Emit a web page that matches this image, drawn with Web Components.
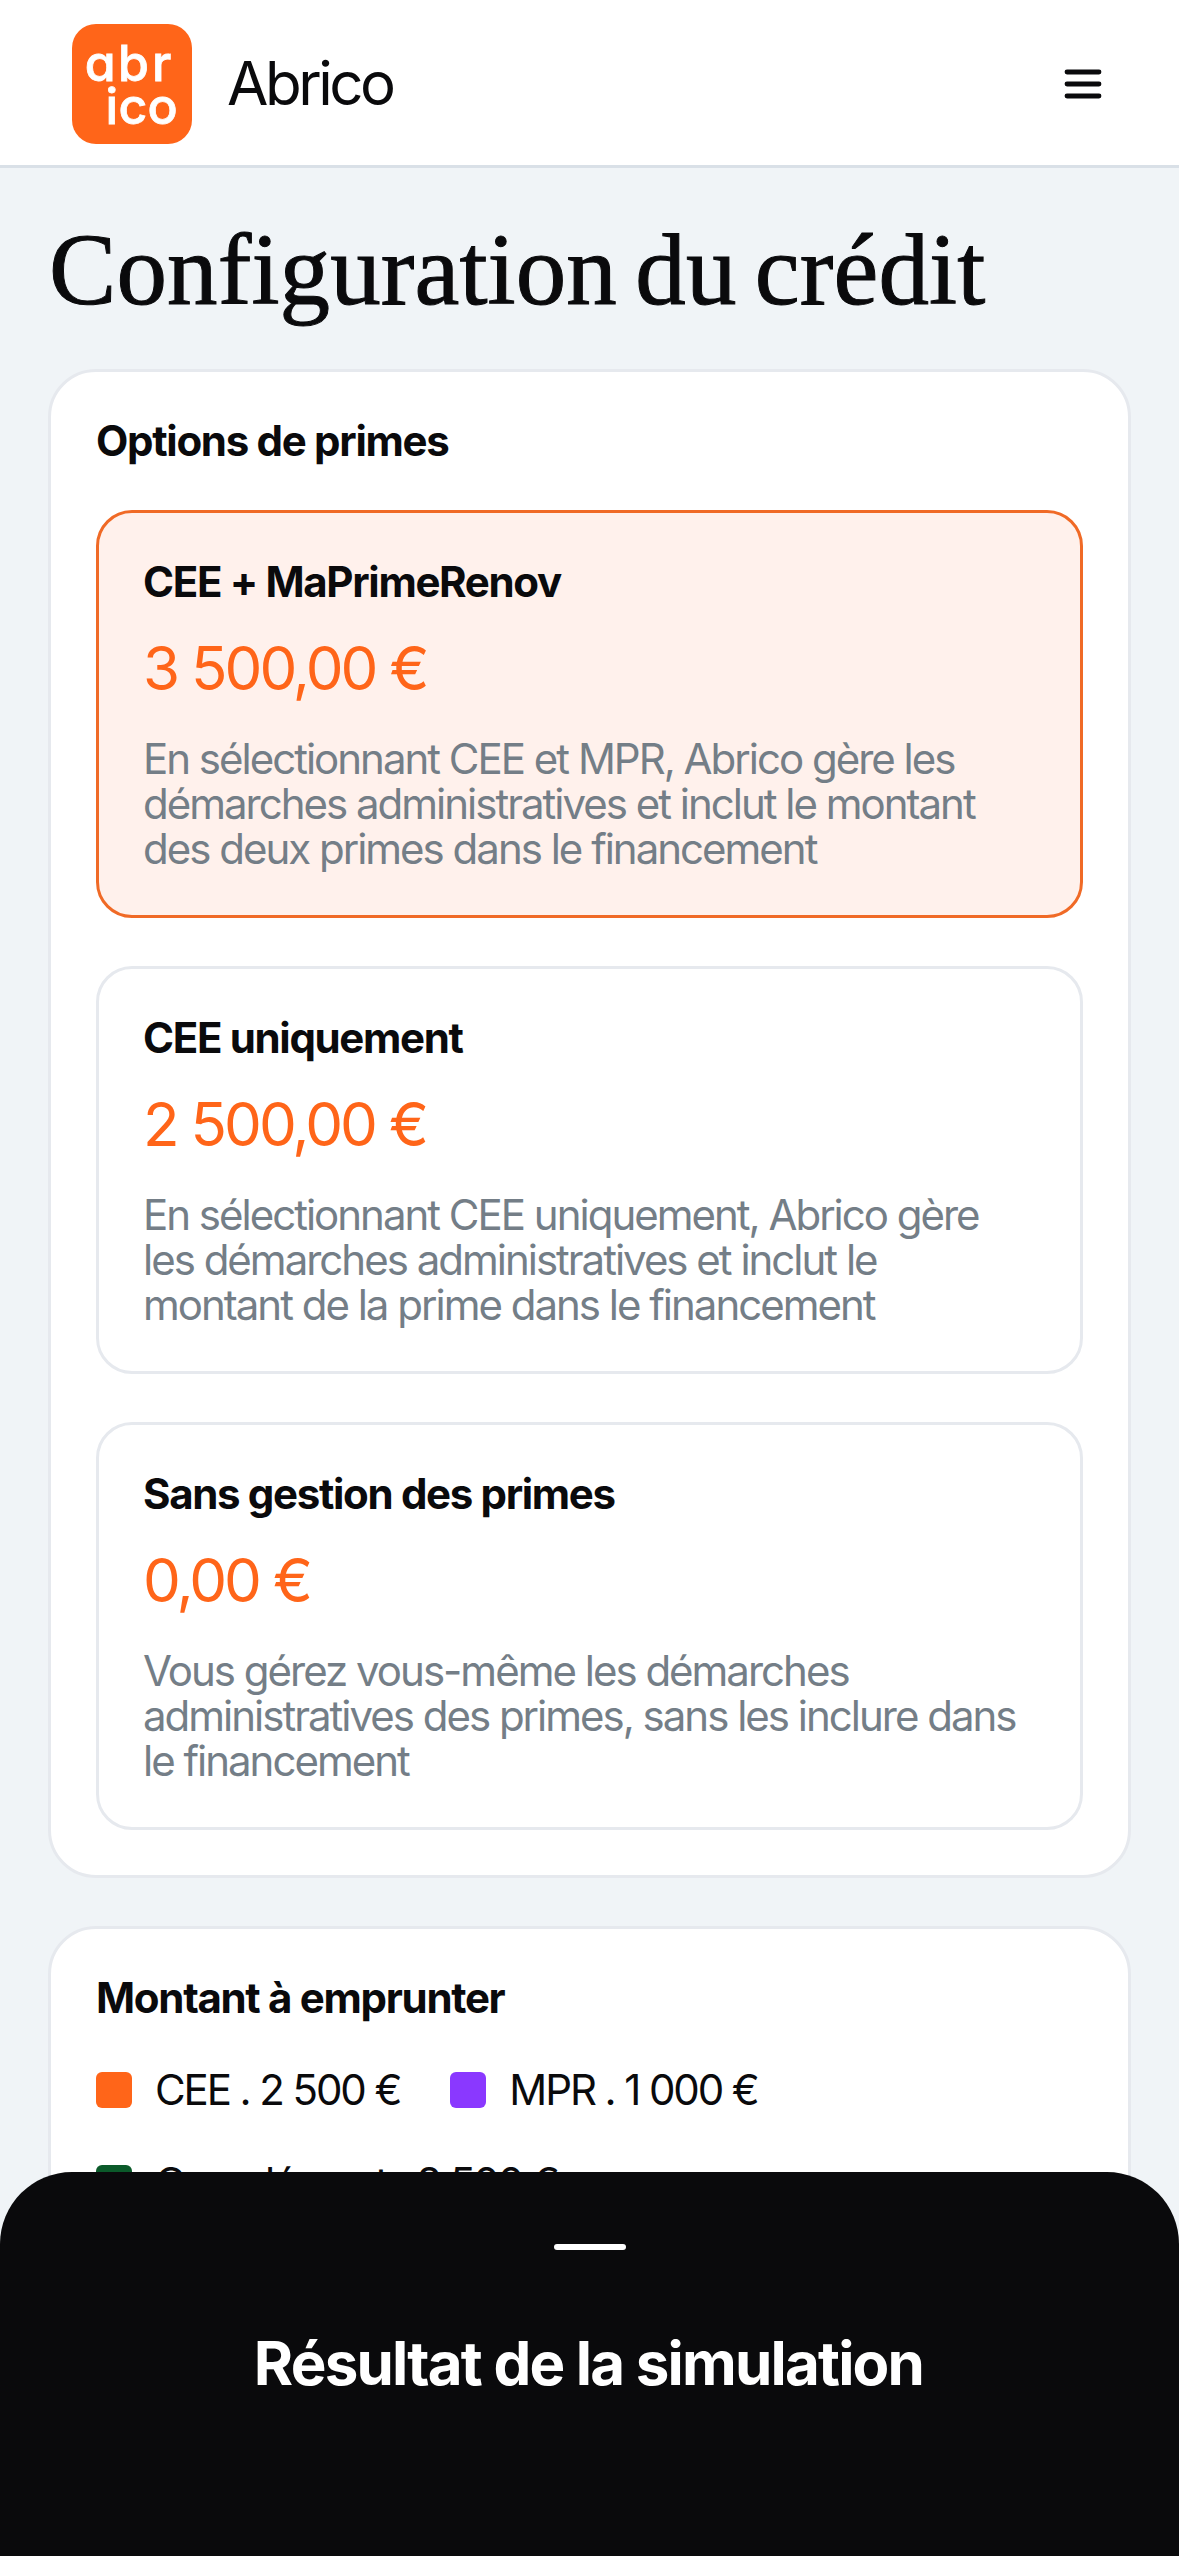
<!DOCTYPE html>
<html lang="fr">
<head>
<meta charset="UTF-8">
<title>Abrico</title>
<style>
    body{
        margin: 0;
        height: 2556px;
        overflow: hidden;
        background-color: #f0f4f7;
        color: #0a0a0c;
        font-family: Inter, 'Liberation Sans', sans-serif;
        font-size: 42px;
    }
    main{
        display: flex;
        flex-direction: column;
        gap: 48px;
        padding: 46px 48px 0;
    }
</style>
</head>
<body>
    <site-header>Abrico</site-header>
    <main>
        <page-title>Configuration du crédit</page-title>
        <config-card>
            <span slot="title">Options de primes</span>
            <prime-option selected>
                <span slot="title">CEE + MaPrimeRenov</span>
                <span slot="price">3 500,00 €</span>
                En sélectionnant CEE et MPR, Abrico gère les démarches administratives et inclut le montant des deux primes dans le financement
            </prime-option>
            <prime-option>
                <span slot="title">CEE uniquement</span>
                <span slot="price">2 500,00 €</span>
                En sélectionnant CEE uniquement, Abrico gère les démarches administratives et inclut le montant de la prime dans le financement
            </prime-option>
            <prime-option>
                <span slot="title">Sans gestion des primes</span>
                <span slot="price">0,00 €</span>
                Vous gérez vous-même les démarches administratives des primes, sans les inclure dans le financement
            </prime-option>
        </config-card>
        <config-card>
            <span slot="title">Montant à emprunter</span>
            <amount-legend>
                <legend-item style="--swatch:#ff6519">CEE . 2 500 €</legend-item>
                <legend-item style="--swatch:#8a38ff">MPR . 1 000 €</legend-item>
                <legend-item style="--swatch:#0b5a2a">Complément . 8 500 €</legend-item>
            </amount-legend>
        </config-card>
    </main>
    <result-sheet>Résultat de la simulation</result-sheet>

<script>
class AbricoLogo extends HTMLElement{
    constructor(){
        super();
        this.attachShadow({mode:'open'});
    }
    connectedCallback(){
        this.shadowRoot.innerHTML = `
        <style>
            :host{
                display: block;
                width: 120px;
                height: 120px;
            }
            svg{
                display: block;
            }
            text{
                font: 500 50px Inter, sans-serif;
                fill: white;
                stroke: white;
                stroke-width: .8px;
            }
        </style>
        <svg width="120" height="120" viewBox="0 0 120 120" aria-label="abrico">
            <rect width="120" height="120" rx="24" fill="#ff6519"/>
            <text x="12.7 46 80 33.6 46.4 75.6" y="57 57 57 100 100 100">ɑbrico</text>
        </svg>
        `
    }
}

class SiteHeader extends HTMLElement{
    constructor(){
        super();
        this.attachShadow({mode:'open'});
    }
    connectedCallback(){
        this.shadowRoot.innerHTML = `
        <style>
            :host{
                display: block;
            }
            header{
                display: flex;
                align-items: center;
                box-sizing: border-box;
                height: 168px;
                padding: 3px 72px 0;
                background-color: white;
                border-bottom: 3px solid #d9e0e7;
            }
            .name{
                margin: 0 0 2px 35px;
                font-size: 60px;
                line-height: 60px;
                letter-spacing: -3.5px;
            }
            .menu{
                margin-left: auto;
            }
        </style>
        <header>
            <abrico-logo></abrico-logo>
            <div class="name"><slot></slot></div>
            <svg class="menu" width="48" height="48" viewBox="0 0 48 48" stroke="#0a0a0c" stroke-width="4.8" stroke-linecap="round">
                <line x1="8" y1="12" x2="40" y2="12"/>
                <line x1="8" y1="24" x2="40" y2="24"/>
                <line x1="8" y1="36" x2="40" y2="36"/>
            </svg>
        </header>
        `
    }
}

class PageTitle extends HTMLElement{
    constructor(){
        super();
        this.attachShadow({mode:'open'});
    }
    connectedCallback(){
        this.shadowRoot.innerHTML = `
        <style>
            :host{
                display: block;
                margin: 0 0 -5px 1px;
            }
            h1{
                margin: 0;
                font: 400 101px/112px 'Liberation Serif', serif;
                font-variant-ligatures: none;
                letter-spacing: .1px;
                word-spacing: -7px;
                white-space: nowrap;
                -webkit-text-stroke: 1px currentColor;
            }
        </style>
        <h1><slot></slot></h1>
        `
    }
}

class ConfigCard extends HTMLElement{
    constructor(){
        super();
        this.attachShadow({mode:'open'});
    }
    connectedCallback(){
        this.shadowRoot.innerHTML = `
        <style>
            :host{
                display: block;
                padding: 45px;
                background-color: white;
                border: 3px solid #e6e9ee;
                border-radius: 48px;
            }
            h2{
                margin: 0 0 45px;
                font-size: 42px;
                font-weight: 700;
                line-height: 48px;
                letter-spacing: -1.3px;
            }
            .content{
                display: flex;
                flex-direction: column;
                gap: 48px;
            }
        </style>
        <h2><slot name="title"></slot></h2>
        <div class="content"><slot></slot></div>
        `
    }
}

class PrimeOption extends HTMLElement{
    constructor(){
        super();
        this.attachShadow({mode:'open'});
    }
    connectedCallback(){
        this.shadowRoot.innerHTML = `
        <style>
            :host{
                display: block;
                padding: 45px 45px 44px 44px;
                border: 3px solid #e6e9ee;
                border-radius: 36px;
            }
            :host([selected]){
                background-color: #fff1ec;
                border-color: #f06a26;
            }
            h3{
                margin: 0;
                font-size: 42px;
                font-weight: 700;
                line-height: 48px;
                letter-spacing: -1.33px;
            }
            .price{
                margin: 32px 0 38px;
                color: #ff6519;
                font-size: 60px;
                line-height: 60px;
                letter-spacing: -2.95px;
            }
            p{
                margin: 0;
                padding-right: 8px;
                color: #747e87;
                line-height: 45px;
                letter-spacing: -2px;
            }
        </style>
        <h3><slot name="title"></slot></h3>
        <div class="price"><slot name="price"></slot></div>
        <p><slot></slot></p>
        `
    }
}

class AmountLegend extends HTMLElement{
    constructor(){
        super();
        this.attachShadow({mode:'open'});
    }
    connectedCallback(){
        this.shadowRoot.innerHTML = `
        <style>
            :host{
                display: flex;
                flex-wrap: wrap;
                gap: 45px 50px;
                margin-top: -1px;
            }
        </style>
        <slot></slot>
        `
    }
}

class LegendItem extends HTMLElement{
    constructor(){
        super();
        this.attachShadow({mode:'open'});
    }
    connectedCallback(){
        this.shadowRoot.innerHTML = `
        <style>
            :host{
                display: flex;
                align-items: center;
                gap: 23px;
                line-height: 48px;
                letter-spacing: -2.1px;
                white-space: nowrap;
            }
            i{
                width: 36px;
                height: 36px;
                border-radius: 6px;
                background-color: var(--swatch);
            }
        </style>
        <i></i>
        <span><slot></slot></span>
        `
    }
}

class ResultSheet extends HTMLElement{
    constructor(){
        super();
        this.attachShadow({mode:'open'});
    }
    connectedCallback(){
        this.shadowRoot.innerHTML = `
        <style>
            :host{
                display: flex;
                flex-direction: column;
                align-items: center;
                box-sizing: border-box;
                position: fixed;
                left: 0;
                right: 0;
                bottom: 0;
                height: 384px;
                padding-top: 72px;
                background-color: #0a0a0c;
                color: white;
                border-radius: 72px 72px 0 0;
            }
            .handle{
                width: 72px;
                height: 6px;
                border-radius: 3px;
                background-color: white;
            }
            h2{
                margin: 83px 2px 0 0;
                font-size: 60px;
                font-weight: 700;
                line-height: 60px;
                letter-spacing: -1.8px;
            }
        </style>
        <div class="handle"></div>
        <h2><slot></slot></h2>
        `
    }
}

customElements.define('abrico-logo',AbricoLogo)
customElements.define('site-header',SiteHeader)
customElements.define('page-title',PageTitle)
customElements.define('config-card',ConfigCard)
customElements.define('prime-option',PrimeOption)
customElements.define('amount-legend',AmountLegend)
customElements.define('legend-item',LegendItem)
customElements.define('result-sheet',ResultSheet)
</script>
</body>
</html>
